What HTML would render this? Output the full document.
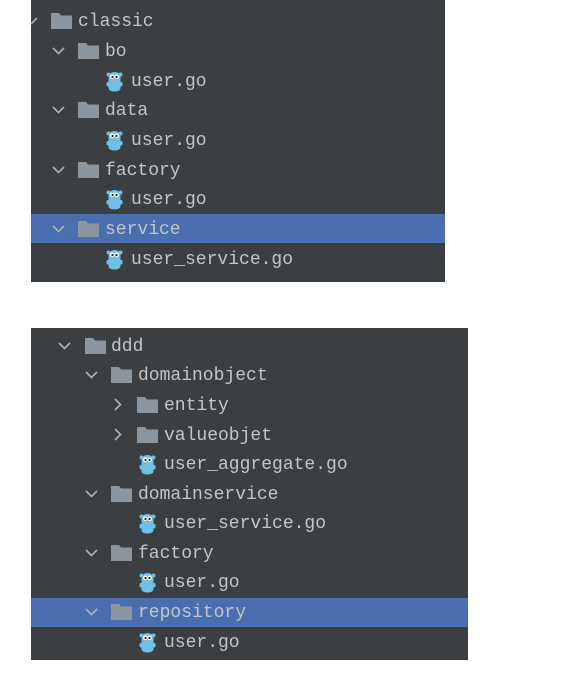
<!DOCTYPE html>
<html><head><meta charset="utf-8"><style>
html,body{margin:0;padding:0;background:#fff;width:585px;height:687px;overflow:hidden;position:relative}
.p{position:absolute;background:#3c3f41}
.sel{position:absolute;background:#4b6eaf}
.t{position:absolute;font-family:"Liberation Mono",monospace;font-size:18px;color:#c3c6c8;line-height:20px;white-space:pre}
svg{position:absolute}
</style></head><body>
<div class="p" style="left:31px;top:0;width:414px;height:282px"></div>
<div class="sel" style="left:31px;top:214px;width:414px;height:29px"></div>
<div class="p" style="left:31px;top:328px;width:437px;height:332px"></div>
<div class="sel" style="left:31px;top:598px;width:437px;height:29px"></div>
<div id="c"></div>
<script>
var rows=[
[24,'d','f',51,78,21,'classic'],
[51,'d','f',78,105,51,'bo'],
[null,0,'g',107,131,81,'user.go'],
[51,'d','f',78,105,110,'data'],
[null,0,'g',107,131,140,'user.go'],
[51,'d','f',78,105,170,'factory'],
[null,0,'g',107,131,199,'user.go'],
[51,'d','f',78,105,229,'service'],
[null,0,'g',107,131,259,'user_service.go'],
[57,'d','f',85,111,346,'ddd'],
[84,'d','f',111,138,375,'domainobject'],
[110,'r','f',137,164,405,'entity'],
[110,'r','f',137,164,435,'valueobjet'],
[null,0,'g',140,164,464,'user_aggregate.go'],
[84,'d','f',111,138,494,'domainservice'],
[null,0,'g',140,164,523,'user_service.go'],
[84,'d','f',111,138,553,'factory'],
[null,0,'g',140,164,582,'user.go'],
[84,'d','f',111,138,612,'repository'],
[null,0,'g',140,164,642,'user.go']];
var h='';
rows.forEach(function(r){
 var y=r[5];
 if(r[0]!==null){
  var d=r[1]=='d'?'M2 5 L7.5 10.5 L13 5':'M5 2 L10.5 7.5 L5 13';
  var clip=r[0]<31?'<div style="position:absolute;left:31px;top:'+(y-8)+'px;width:10px;height:15px;overflow:hidden"><svg style="left:'+(r[0]-31)+'px;top:0" width="15" height="15"><path d="'+d+'" fill="none" stroke="#afb1b3" stroke-width="1.6"/></svg></div>':
  '<svg style="left:'+r[0]+'px;top:'+(y-8)+'px" width="15" height="15"><path d="'+d+'" fill="none" stroke="#afb1b3" stroke-width="1.6"/></svg>';
  h+=clip;
 }
 if(r[2]=='f'){
  h+='<svg style="left:'+r[3]+'px;top:'+(y-9)+'px" width="21" height="18"><path d="M0 1 H8 L10 3.5 H21 V17 H0 Z" fill="#8c969e"/></svg>';
 }else{
  h+='<svg style="left:'+(r[3]-1)+'px;top:'+(y-10)+'px" width="17" height="21" viewBox="0 0 17 21">'+
  '<circle cx="2.5" cy="3.5" r="2" fill="#6fbfe6"/><circle cx="14.5" cy="3.5" r="2" fill="#6fbfe6"/>'+
  '<path d="M2.5 8 Q2.5 1 8.5 1 Q14.5 1 14.5 8 V17 Q14.5 20.5 8.5 20.5 Q2.5 20.5 2.5 17 Z" fill="#6fbfe6"/>'+
  '<rect x="0.5" y="11" width="3" height="4.5" rx="1.2" fill="#6fbfe6"/><rect x="13.5" y="11" width="3" height="4.5" rx="1.2" fill="#6fbfe6"/>'+
  '<circle cx="6.2" cy="5.8" r="2.3" fill="#fff"/><circle cx="10.8" cy="5.8" r="2.3" fill="#fff"/>'+
  '<circle cx="6.5" cy="6" r="1.1" fill="#222"/><circle cx="10.5" cy="6" r="1.1" fill="#222"/>'+
  '<ellipse cx="8.5" cy="9.2" rx="1.4" ry="1" fill="#c9a27a"/></svg>';
 }
 h+='<div class="t" style="left:'+r[4]+'px;top:'+(y-9)+'px">'+r[6]+'</div>';
});
document.getElementById('c').innerHTML=h;
</script>
</body></html>
